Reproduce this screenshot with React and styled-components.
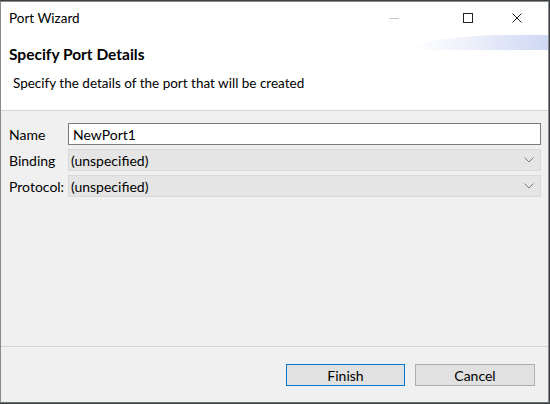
import React from "react";
import styled, { createGlobalStyle } from "styled-components";

const Global = createGlobalStyle`
  html, body {
    margin: 0;
    padding: 0;
    background: #3c3f44;
    width: 550px;
    height: 404px;
    overflow: hidden;
  }
  * { box-sizing: border-box; }
`;

const Window = styled.div`
  margin-top: 1px;
  width: 549px;
  height: 402px;
  border: 1px solid #8a8a8a;
  border-bottom-color: #6f6f6f;
  background: #f0f0f0;
  display: flex;
  flex-direction: column;
  font-family: "Lato", "Noto Sans", sans-serif;
  color: #000;
  font-size: 13.5px;
`;

const TitleBar = styled.div`
  height: 32px;
  background: #fff;
  display: flex;
  align-items: center;
  padding: 0 8px 0 8px;
`;

const Title = styled.span`
  flex: 1;
  font-size: 13.5px;
`;

const Control = styled.div`
  width: ${(p) => p.w}px;
  height: 32px;
  display: flex;
  align-items: center;
  justify-content: center;
`;

const Header = styled.div`
  background: #fff;
  height: 77px;
  border-bottom: 1px solid #d4d4d4;
  position: relative;
  padding: 9px 8px 0;
`;

const Banner = styled.div`
  position: absolute;
  right: 0;
  top: 1px;
  width: 135px;
  height: 15px;
  border-top-left-radius: 100px 15px;
  background: linear-gradient(to right, #ffffff 0%, #eef1fb 40%, #cfd8f4 100%);
`;

const Heading = styled.div`
  font-weight: bold;
  font-size: 15.5px;
  line-height: 22px;
`;

const Description = styled.div`
  margin-top: 8px;
  padding-left: 4px;
  line-height: 20px;
`;

const Form = styled.div`
  flex: 1;
  display: grid;
  grid-template-columns: 59px 1fr;
  grid-auto-rows: 22px;
  row-gap: 4px;
  align-content: start;
  padding: 12px 7px 0 8px;
  border-bottom: 1px solid #d6d6d6;
  font-size: 14px;
`;

const Label = styled.div`
  display: flex;
  align-items: center;
  white-space: nowrap;
`;

const TextInput = styled.div`
  border: 1px solid #7a7a7a;
  background: #fff;
  display: flex;
  align-items: center;
  padding-left: 4px;
`;

const Combo = styled.div`
  border: 1px solid #d9d9d9;
  background: #e5e5e5;
  display: flex;
  align-items: center;
  padding: 0 6px 0 2px;
`;

const ComboText = styled.span`
  flex: 1;
`;

const Footer = styled.div`
  height: 55px;
  display: flex;
  justify-content: flex-end;
  align-items: flex-start;
  gap: 10px;
  padding: 17px 13px 0 0;
  font-size: 14px;
`;

const Button = styled.div`
  width: ${(p) => p.w}px;
  height: 22px;
  background: #e1e1e1;
  border: 1px solid ${(p) => (p.primary ? "#0078d7" : "#adadad")};
  display: flex;
  align-items: center;
  justify-content: center;
`;

const Chevron = () => (
  <svg width="10" height="6" viewBox="0 0 10 6">
    <path d="M0.5 0.5 L5 5 L9.5 0.5" fill="none" stroke="#7a7a7a" strokeWidth="1" />
  </svg>
);

export default function App() {
  return (
    <>
      <Global />
      <Window>
        <TitleBar>
          <Title>Port Wizard</Title>
          <Control w={96}>
            <svg width="10" height="1"><rect width="10" height="1" fill="#c8c8c8" /></svg>
          </Control>
          <Control w={52}>
            <svg width="10" height="10" viewBox="0 0 10 10">
              <rect x="0.5" y="0.5" width="9" height="9" fill="none" stroke="#222" strokeWidth="1" />
            </svg>
          </Control>
          <Control w={46}>
            <svg width="10" height="10" viewBox="0 0 10 10">
              <path d="M0.5 0.5 L9.5 9.5 M9.5 0.5 L0.5 9.5" stroke="#222" strokeWidth="1" />
            </svg>
          </Control>
        </TitleBar>
        <Header>
          <Banner />
          <Heading>Specify Port Details</Heading>
          <Description>Specify the details of the port that will be created</Description>
        </Header>
        <Form>
          <Label>Name</Label>
          <TextInput>NewPort1</TextInput>
          <Label>Binding</Label>
          <Combo>
            <ComboText>(unspecified)</ComboText>
            <Chevron />
          </Combo>
          <Label>Protocol:</Label>
          <Combo>
            <ComboText>(unspecified)</ComboText>
            <Chevron />
          </Combo>
        </Form>
        <Footer>
          <Button w={119} primary>Finish</Button>
          <Button w={120}>Cancel</Button>
        </Footer>
      </Window>
    </>
  );
}
